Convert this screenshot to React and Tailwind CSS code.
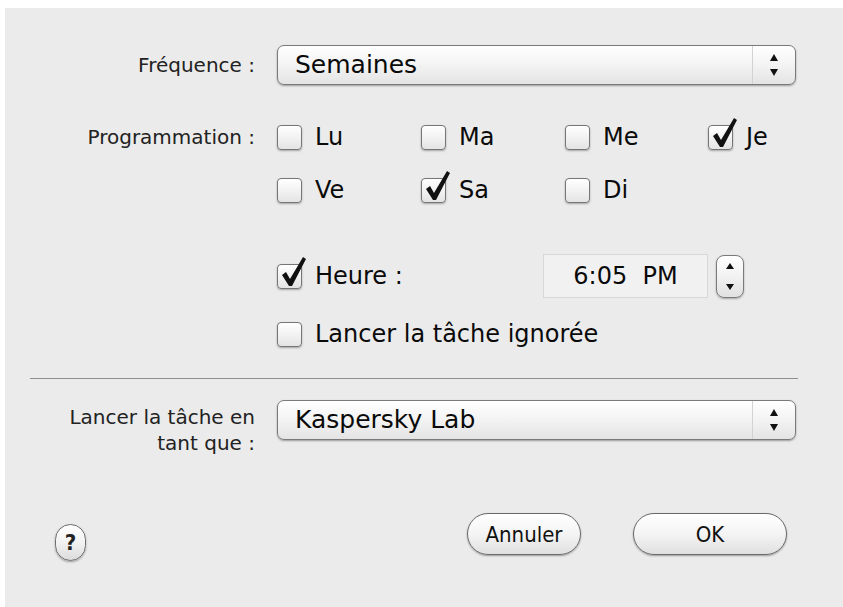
import React from 'react';

const font = { fontFamily: '"DejaVu Sans", "Liberation Sans", sans-serif' };
const narrow = { fontFamily: '"DejaVu Sans Condensed", "DejaVu Sans", "Liberation Sans", sans-serif' };

const UpDown = () => (
  <svg width="10" height="24" viewBox="0 0 10 24">
    <polygon points="5,1 9,8 1,8" fill="#111" />
    <polygon points="1,16 9,16 5,23" fill="#111" />
  </svg>
);

const Popup = ({ value }) => (
  <div className="flex-1 h-[40px] rounded-[7px] border border-[#7a7a7a] bg-gradient-to-b from-white via-[#f3f3f3] to-[#e4e4e4] shadow-[0_1px_2px_rgba(0,0,0,0.35)] flex items-stretch">
    <div className="flex-1 flex items-center pl-[17px] text-[25px] text-[#0a0a0a]">{value}</div>
    <div className="w-[43px] border-l border-[#d2d2d2] flex items-center justify-center">
      <UpDown />
    </div>
  </div>
);

const Check = ({ checked }) => (
  <div className="relative w-[25px] h-[25px] shrink-0 rounded-[4px] border border-[#767676] bg-gradient-to-b from-white via-[#f2f2f2] to-[#e4e4e4] shadow-[0_1px_2px_rgba(0,0,0,0.3)]">
    {checked && (
      <svg width="30" height="32" viewBox="0 0 30 32" className="absolute left-[1px] top-[-9px] overflow-visible">
        <polygon points="3,19 7,16 11,23 24,1 27,3 13,30 10,30" fill="#111" />
      </svg>
    )}
  </div>
);

const Box = ({ label, checked }) => (
  <div className="flex items-center gap-[13px] h-[30px]">
    <Check checked={checked} />
    <span className="text-[24px] text-[#0a0a0a]">{label}</span>
  </div>
);

const Label = ({ children, className = '' }) => (
  <div className={`w-[250px] shrink-0 text-right text-[20px] text-[#222] ${className}`}>{children}</div>
);

export default function App() {
  return (
    <div className="w-[843px] h-[607px] bg-white pt-[8px] pl-[5px]" style={font}>
      <div className="h-full bg-[#ebebeb] flex flex-col">
        {/* Fréquence */}
        <div className="flex items-center mt-[37px] mr-[47px]">
          <Label>Fréquence :</Label>
          <div className="ml-[22px] flex-1 flex">
            <Popup value="Semaines" />
          </div>
        </div>

        {/* Programmation */}
        <div className="flex items-start mt-[37px]">
          <Label className="h-[30px] leading-[30px]">Programmation :</Label>
          <div className="ml-[22px] grid grid-cols-[144px_144px_143px_auto] gap-y-[23px]">
            <Box label="Lu" />
            <Box label="Ma" />
            <Box label="Me" />
            <Box label="Je" checked />
            <Box label="Ve" />
            <Box label="Sa" checked />
            <Box label="Di" />
          </div>
        </div>

        {/* Heure */}
        <div className="flex items-center mt-[49px] pl-[272px]">
          <div className="w-[266px]">
            <Box label="Heure :" checked />
          </div>
          <div className="w-[165px] h-[44px] bg-[#f1f1f1] border border-[#d8d8d8] flex items-center justify-center text-[24px] text-[#0a0a0a] whitespace-pre">
            6:05  PM
          </div>
          <div className="ml-[8px] w-[28px] h-[43px] rounded-[8px] border border-[#7a7a7a] bg-gradient-to-b from-white via-[#f2f2f2] to-[#e0e0e0] shadow-[0_1px_2px_rgba(0,0,0,0.3)] flex flex-col items-center justify-between py-[6px]">
            <svg width="10" height="8" viewBox="0 0 10 8"><polygon points="5,1 9,7 1,7" fill="#111" /></svg>
            <svg width="10" height="8" viewBox="0 0 10 8"><polygon points="1,1 9,1 5,7" fill="#111" /></svg>
          </div>
        </div>

        <div className="mt-[21px] pl-[272px]">
          <Box label="Lancer la tâche ignorée" />
        </div>

        <div className="mt-[29px] ml-[25px] mr-[45px] h-px bg-[#8f8f8f]" />

        {/* Lancer en tant que */}
        <div className="flex items-start mt-[21px] mr-[47px]">
          <Label className="pt-[4px] leading-[26px]">
            Lancer la tâche en
            <br />
            tant que :
          </Label>
          <div className="ml-[22px] flex-1 flex">
            <Popup value="Kaspersky Lab" />
          </div>
        </div>

        {/* Buttons */}
        <div className="flex items-start mt-[57px] ml-[50px] mr-[56px]" style={narrow}>
          <div className="mt-[11px] w-[31px] h-[37px] rounded-full border border-[#6f6f6f] bg-gradient-to-b from-white via-[#f2f2f2] to-[#dcdcdc] shadow-[0_1px_2px_rgba(0,0,0,0.35)] flex items-center justify-center text-[22px] font-bold text-[#222]">
            ?
          </div>
          <button className="ml-auto w-[114px] h-[42px] rounded-full border border-[#6a6a6a] bg-gradient-to-b from-white via-[#f4f4f4] to-[#e0e0e0] shadow-[0_1px_2px_rgba(0,0,0,0.35)] text-[22px] text-[#111]">
            Annuler
          </button>
          <button className="ml-[52px] w-[154px] h-[42px] rounded-full border border-[#6a6a6a] bg-gradient-to-b from-white via-[#f4f4f4] to-[#e0e0e0] shadow-[0_1px_2px_rgba(0,0,0,0.35)] text-[22px] text-[#111]">
            OK
          </button>
        </div>
      </div>
    </div>
  );
}
